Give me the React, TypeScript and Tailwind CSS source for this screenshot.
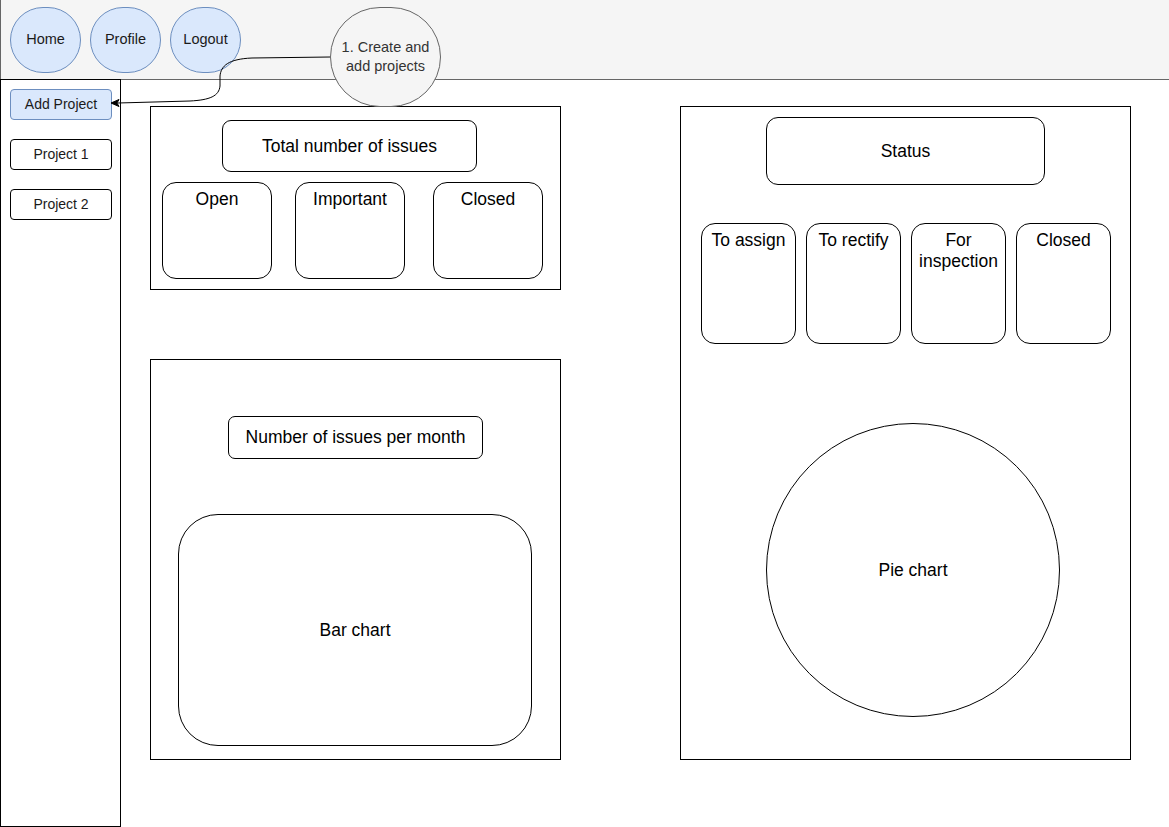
import React from "react";

const Box = ({ className = "", children }: { className?: string; children?: React.ReactNode }) => (
  <div className={`border border-black bg-white ${className}`}>{children}</div>
);

export default function App() {
  return (
    <div
      className="relative w-[1169px] h-[827px] bg-white overflow-hidden text-black"
      style={{ fontFamily: '"Liberation Sans", Arial, sans-serif' }}
    >
      {/* Header */}
      <header className="h-[80px] bg-[#f5f5f5] border-l border-b border-[#666666] flex items-center gap-[9px] pl-[9px]">
        {["Home", "Profile", "Logout"].map((t) => (
          <div
            key={t}
            className="w-[71px] h-[66px] rounded-full bg-[#dae8fc] border border-[#6c8ebf] flex items-center justify-center text-[14.5px] text-[#1a1a1a]"
          >
            {t}
          </div>
        ))}
      </header>

      <div className="flex">
        {/* Sidebar */}
        <aside className="-mt-px w-[121px] h-[748px] border border-black flex flex-col gap-[19px] pt-[9px] pl-[9px]">
          <div className="w-[102px] h-[31px] rounded-[4px] bg-[#dae8fc] border border-[#6c8ebf] flex items-center justify-center text-[14px] text-[#1a1a1a]">
            Add Project
          </div>
          {["Project 1", "Project 2"].map((t) => (
            <div
              key={t}
              className="w-[102px] h-[31px] rounded-[4px] bg-white border border-black flex items-center justify-center text-[14px] text-[#1a1a1a]"
            >
              {t}
            </div>
          ))}
        </aside>

        {/* Main */}
        <main className="flex pt-[26px] pl-[29px] gap-[119px]">
          <div className="flex flex-col gap-[69px]">
            {/* Card 1 */}
            <Box className="w-[411px] h-[184px] flex flex-col">
              <div className="ml-[71px] mt-[13px] w-[255px] h-[52px] rounded-[9px] border border-black flex items-center justify-center text-[17.5px]">
                Total number of issues
              </div>
              <div className="flex mt-[10px] ml-[11px]">
                <div className="w-[110px] h-[97px] rounded-[14px] border border-black text-center text-[17.5px] leading-[20px] pt-[6px]">
                  Open
                </div>
                <div className="ml-[23px] w-[110px] h-[97px] rounded-[14px] border border-black text-center text-[17.5px] leading-[20px] pt-[6px]">
                  Important
                </div>
                <div className="ml-[28px] w-[110px] h-[97px] rounded-[14px] border border-black text-center text-[17.5px] leading-[20px] pt-[6px]">
                  Closed
                </div>
              </div>
            </Box>

            {/* Card 2 */}
            <Box className="w-[411px] h-[401px] flex flex-col">
              <div className="ml-[77px] mt-[56px] w-[255px] h-[43px] rounded-[7px] border border-black flex items-center justify-center text-[17.5px]">
                Number of issues per month
              </div>
              <div className="ml-[27px] mt-[55px] w-[354px] h-[232px] rounded-[40px] border border-black flex items-center justify-center text-[17.5px]">
                Bar chart
              </div>
            </Box>
          </div>

          {/* Card 3 */}
          <Box className="w-[451px] h-[654px] flex flex-col">
            <div className="ml-[85px] mt-[10px] w-[279px] h-[68px] rounded-[12px] border border-black flex items-center justify-center text-[17.5px]">
              Status
            </div>
            <div className="flex gap-[10px] ml-[20px] mt-[38px]">
              {[
                ["To assign"],
                ["To rectify"],
                ["For", "inspection"],
                ["Closed"],
              ].map((lines, i) => (
                <div
                  key={i}
                  className="w-[95px] h-[121px] rounded-[14px] border border-black text-center text-[17.5px] leading-[21px] pt-[6px]"
                >
                  {lines.map((l) => (
                    <div key={l}>{l}</div>
                  ))}
                </div>
              ))}
            </div>
            <div className="ml-[85px] mt-[79px] w-[294px] h-[294px] rounded-full border border-black flex items-center justify-center text-[17.5px]">
              Pie chart
            </div>
          </Box>
        </main>
      </div>

      {/* Connector arrow */}
      <svg className="absolute left-0 top-0 pointer-events-none" width="1169" height="827">
        <path
          d="M330,57 L252,58 C228,59 221,66 220,76 L220,86 C219,96 210,100 190,101 L118,103"
          fill="none"
          stroke="#000"
          strokeWidth="1"
        />
        <polygon points="111,103 119,99.5 117,103 119,106.5" fill="#000" stroke="#000" strokeWidth="1" />
      </svg>

      {/* Annotation bubble */}
      <div className="absolute left-[330px] top-[7px] w-[111px] h-[100px] rounded-full bg-[#f5f5f5] border border-[#666666] flex items-center justify-center text-center text-[14.5px] leading-[19px] text-[#333333]">
        1. Create and
        <br />
        add projects
      </div>
    </div>
  );
}
